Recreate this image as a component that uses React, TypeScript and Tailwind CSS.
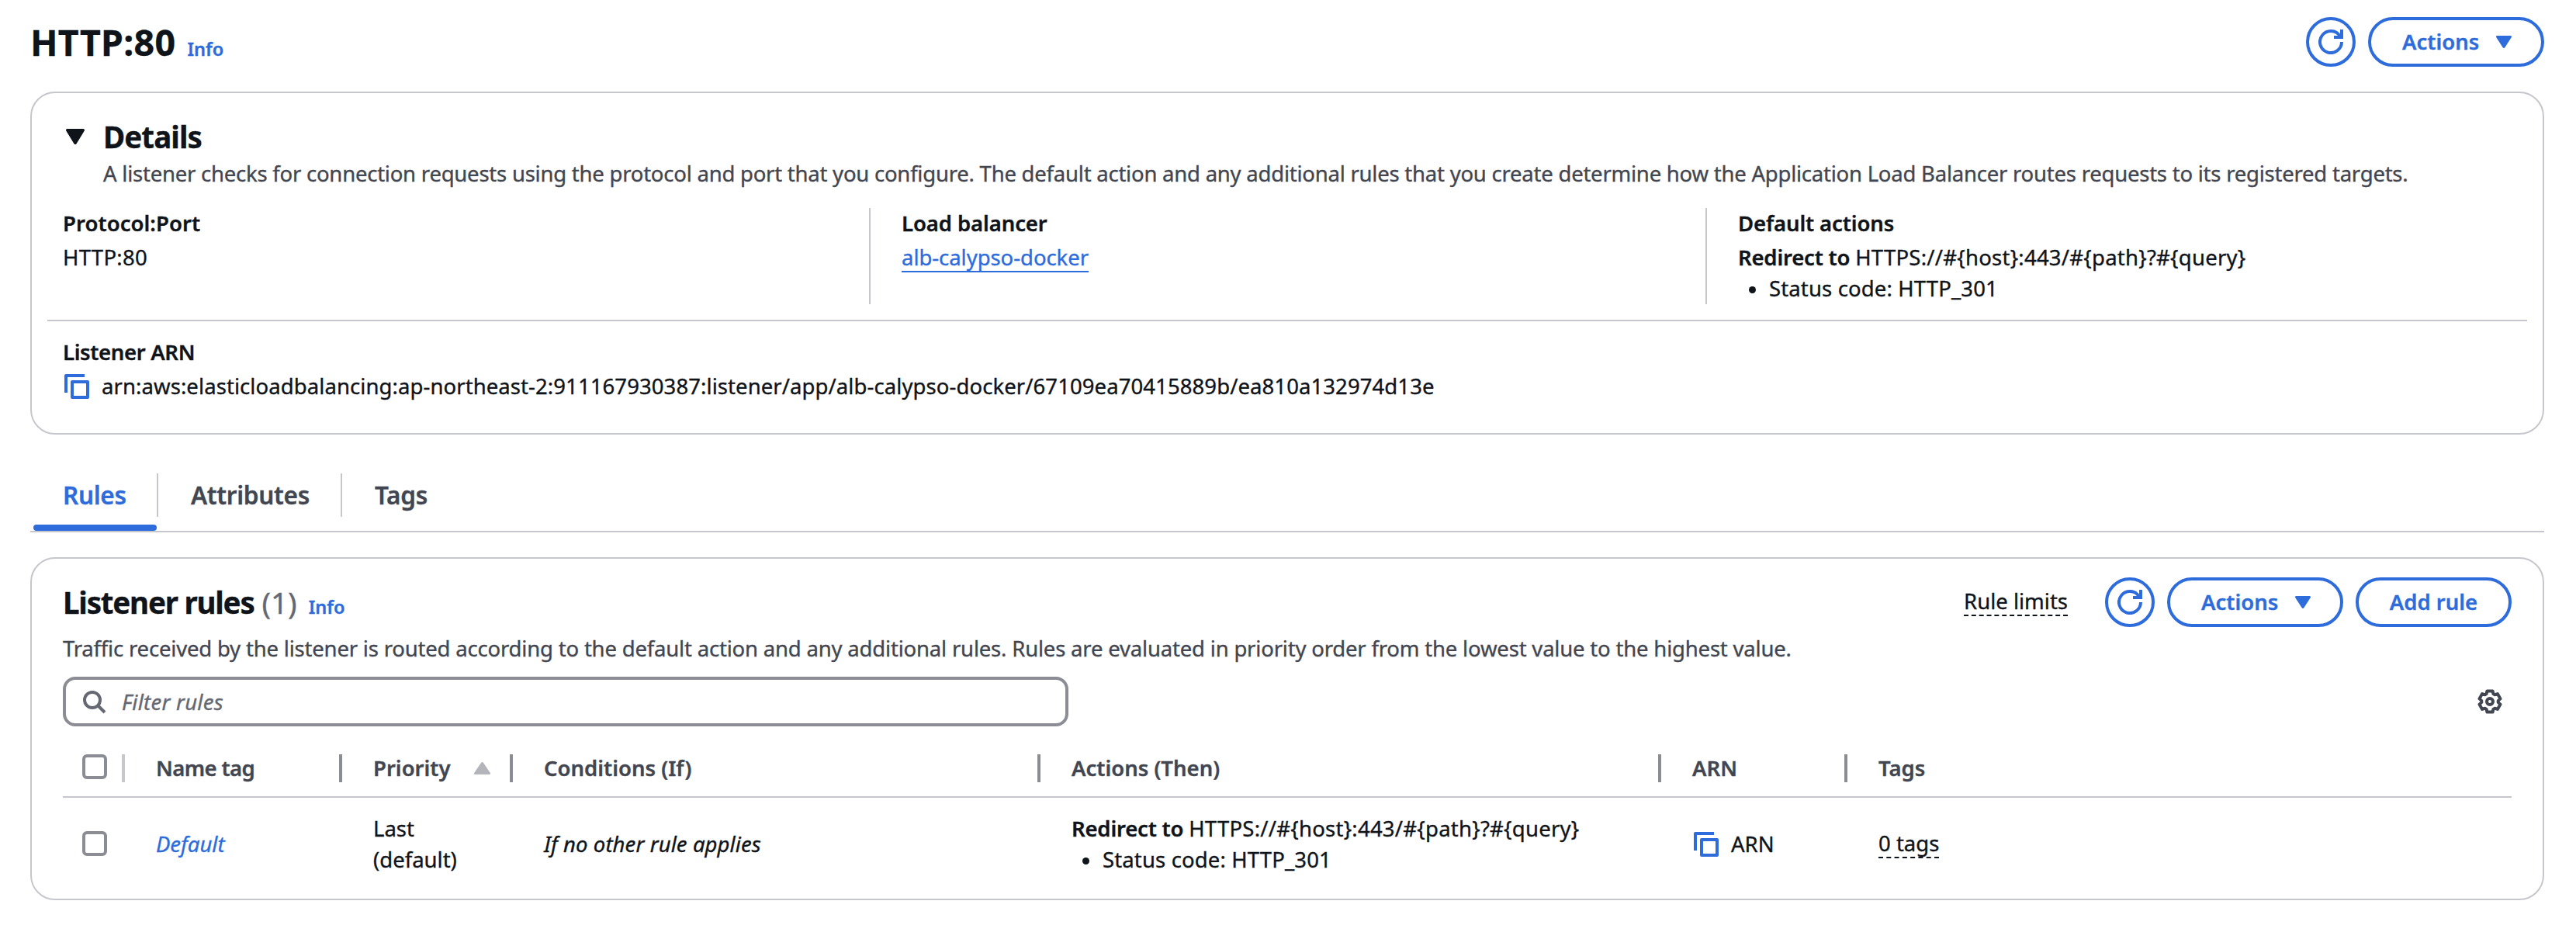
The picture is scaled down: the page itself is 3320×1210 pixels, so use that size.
import type { ReactNode } from "react";

function RefreshIcon() {
  return (
    <svg viewBox="0 0 32 32" className="h-8 w-8" fill="none" stroke="currentColor" strokeWidth="4">
      <path d="M30 16a14 14 0 1 1-2.2-7.5" />
      <path d="M30 0v10H20" />
    </svg>
  );
}

function CaretDown({ className }: { className: string }) {
  return (
    <svg viewBox="0 0 20 16" preserveAspectRatio="none" className={className} fill="currentColor">
      <path d="M1.4 0h17.2c1.2 0 1.8 1.300 1.100 2.200L11.300 15.300c-.6.900-2 .900-2.600 0L.3 2.200C-.4 1.300.2 0 1.400 0z" />
    </svg>
  );
}

function CopyIcon() {
  return (
    <svg viewBox="0 0 32 32" className="h-8 w-8 shrink-0 text-[#2e6cdb]" fill="none" stroke="currentColor" strokeWidth="4">
      <path d="M26 2H2V24" strokeLinejoin="round" />
      <rect x="10" y="10" width="20" height="20" strokeLinejoin="round" />
    </svg>
  );
}

function SearchIcon() {
  return (
    <svg viewBox="0 0 32 32" className="h-8 w-8 shrink-0 text-[#656871]" fill="none" stroke="currentColor" strokeWidth="4">
      <circle cx="14" cy="14" r="10" />
      <path d="M21 21l9 9" />
    </svg>
  );
}

function GearIcon() {
  const tooth: [number, number][] = [
    [10.8, -24],
    [14, -15],
    [14, 15],
    [10.8, 24],
  ];
  const points = [0, 60, 120, 180, 240, 300]
    .flatMap((base) =>
      tooth.map(([r, a]) => {
        const t = ((base + a - 90) * Math.PI) / 180;
        return `${(16 + r * Math.cos(t)).toFixed(2)},${(16 + r * Math.sin(t)).toFixed(2)}`;
      }),
    )
    .join(" ");
  return (
    <svg viewBox="0 0 32 32" className="h-8 w-8 text-[#424650]" fill="none" stroke="currentColor" strokeWidth="4" strokeLinejoin="round">
      <polygon points={points} />
      <circle cx="16" cy="16" r="4" />
    </svg>
  );
}

function RefreshButton() {
  return (
    <button className="flex h-16 w-16 items-center justify-center rounded-full border-4 border-[#2e6cdb] text-[#2e6cdb]">
      <RefreshIcon />
    </button>
  );
}

function ActionsButton() {
  return (
    <button className="flex h-16 w-[227px] items-center justify-between rounded-full border-4 border-[#2e6cdb] pr-[38px] pl-10 font-semibold text-[#2e6cdb]">
      <span>Actions</span>
      <CaretDown className="h-4 w-5" />
    </button>
  );
}

function RedirectAction() {
  return (
    <div className="leading-[40px] whitespace-nowrap">
      <div className="flex">
        <span className="font-semibold tracking-[-0.2px] whitespace-pre">Redirect to </span>
        <span className="tracking-[0.24px]">{"HTTPS://#{host}:443/#{path}?#{query}"}</span>
      </div>
      <div className="flex items-center gap-[17px] pl-[14px]">
        <span className="mt-[2px] h-[9px] w-[9px] rounded-full bg-[#0f141a]" />
        <span className="tracking-[0.14px]">Status code: HTTP_301</span>
      </div>
    </div>
  );
}

function Checkbox({ className = "" }: { className?: string }) {
  return <span className={`ml-[25px] block h-8 w-8 rounded-md border-4 border-[#8c8c94] ${className}`} />;
}

function HeaderCell({ children, last = false }: { children: ReactNode; last?: boolean }) {
  return (
    <div className={last ? "flex h-9 items-center pl-10" : "flex h-9 items-center justify-between border-r-4 border-[#8c8c94] pr-[25px] pl-10"}>
      {children}
    </div>
  );
}

const columns = "grid grid-cols-[80px_280px_220px_680px_800px_240px_1fr]";

export default function App() {
  return (
    <div className="h-[1210px] w-[3320px] overflow-hidden bg-white pt-[22px] pr-[41px] pl-[39px] font-['Noto_Sans',sans-serif] text-[27.5px] leading-[40px] text-[#0f141a] [-webkit-text-stroke:0.35px]">
      <header className="flex h-16 items-center justify-between">
        <div className="flex items-baseline gap-[15px]">
          <h1 className="text-[46.5px] leading-[60px] font-bold tracking-[0.3px]">HTTP:80</h1>
          <a className="text-[23.5px] leading-none font-semibold text-[#2e6cdb]">Info</a>
        </div>
        <div className="flex gap-4">
          <RefreshButton />
          <ActionsButton />
        </div>
      </header>

      <section className="mt-8 h-[442px] rounded-[32px] border-2 border-[#c6c6cd] px-10 pt-8">
        <div className="flex items-center gap-6">
          <CaretDown className="ml-1 h-5 w-6" />
          <h2 className="text-[38.5px] leading-[48px] font-bold tracking-[-0.9px]">Details</h2>
        </div>
        <p className="mt-1 pl-[52px] tracking-[-0.23px] whitespace-nowrap text-[#424650]">
          A listener checks for connection requests using the protocol and port that you configure. The default action and any
          additional rules that you create determine how the Application Load Balancer routes requests to its registered targets.
        </p>

        <div className="mt-6 grid h-[124px] grid-cols-[1039px_1078px_1fr]">
          <div className="pt-px">
            <div className="leading-[38px] font-semibold tracking-[0.05px]">Protocol:Port</div>
            <div className="mt-[5px] tracking-[0.3px]">HTTP:80</div>
          </div>
          <div className="border-l-2 border-[#c6c6cd] pt-px pl-10">
            <div className="leading-[38px] font-semibold tracking-[-0.1px]">Load balancer</div>
            <a className="mt-[7px] block w-fit border-b-2 border-[#2e6cdb] leading-[35px] tracking-[-0.05px] text-[#2e6cdb]">
              alb-calypso-docker
            </a>
          </div>
          <div className="border-l-2 border-[#c6c6cd] pt-px pl-10">
            <div className="mb-[5px] leading-[38px] font-semibold tracking-[-0.13px]">Default actions</div>
            <RedirectAction />
          </div>
        </div>

        <hr className="-mx-5 mt-5 border-t-2 border-[#c6c6cd]" />

        <div className="mt-[21px] leading-[38px] font-semibold tracking-[-0.35px]">Listener ARN</div>
        <div className="mt-[5px] flex items-center gap-4 pl-[2px]">
          <CopyIcon />
          <span className="tracking-[0.08px] whitespace-nowrap">
            arn:aws:elasticloadbalancing:ap-northeast-2:911167930387:listener/app/alb-calypso-docker/67109ea70415889b/ea810a132974d13e
          </span>
        </div>
      </section>

      <nav className="mt-[50px] flex h-[76px] border-b-2 border-[#c6c6cd] pl-1 text-[31.5px] leading-[56px] font-semibold text-[#424650]">
        <div className="flex w-[161px] flex-col">
          <span className="h-14 border-r-2 border-[#c6c6cd] pl-[38px] tracking-[-0.3px] text-[#2e6cdb]">Rules</span>
          <span className="mt-[10px] h-2 w-[159px] rounded-full bg-[#2e6cdb]" />
        </div>
        <span className="h-14 w-[237px] border-r-2 border-[#c6c6cd] pl-[42px] tracking-[-0.3px]">Attributes</span>
        <span className="h-14 pl-[42px] tracking-[-0.3px]">Tags</span>
      </nav>

      <section className="mt-8 h-[442px] rounded-[32px] border-2 border-[#c6c6cd] px-10 pt-6">
        <div className="flex h-16 items-center justify-between">
          <div className="flex items-baseline">
            <h2 className="text-[38.5px] leading-[48px] font-bold tracking-[-1.2px]">Listener rules</h2>
            <span className="ml-[10px] text-[38.5px] leading-[48px] text-[#656871]">(1)</span>
            <a className="ml-[15px] text-[23.5px] leading-none font-semibold text-[#2e6cdb]">Info</a>
          </div>
          <div className="flex items-center gap-4">
            <a className="mr-8 border-b-2 border-dashed border-[#0f141a] leading-[34px]">Rule limits</a>
            <RefreshButton />
            <ActionsButton />
            <button className="flex h-16 w-[201px] items-center justify-center rounded-full border-4 border-[#2e6cdb] font-semibold text-[#2e6cdb]">
              Add rule
            </button>
          </div>
        </div>
        <p className="mt-2 tracking-[-0.19px] whitespace-nowrap text-[#424650]">
          Traffic received by the listener is routed according to the default action and any additional rules. Rules are
          evaluated in priority order from the lowest value to the highest value.
        </p>

        <div className="mt-4 flex items-center justify-between pr-3">
          <div className="flex h-16 w-[1296px] items-center gap-5 rounded-2xl border-4 border-[#8c8c94] pl-5 text-[#656871]">
            <SearchIcon />
            <span className="pt-px tracking-[0.25px] italic">Filter rules</span>
          </div>
          <GearIcon />
        </div>

        <div className={`${columns} h-[92px] border-b-2 border-[#c6c6cd] pt-9 font-semibold text-[#424650]`}>
          <div className="h-9 border-r-4 border-[#c6c6cd]">
            <Checkbox />
          </div>
          <HeaderCell>
            <span className="tracking-[-0.6px]">Name tag</span>
          </HeaderCell>
          <HeaderCell>
            <span>Priority</span>
            <CaretDown className="h-4 w-[21px] rotate-180 text-[#b4b4bb]" />
          </HeaderCell>
          <HeaderCell>Conditions (If)</HeaderCell>
          <HeaderCell>Actions (Then)</HeaderCell>
          <HeaderCell>ARN</HeaderCell>
          <HeaderCell last>Tags</HeaderCell>
        </div>

        <div className={`${columns} items-center pt-5`}>
          <Checkbox className="mb-[2px]" />
          <a className="pl-10 text-[#2e6cdb] italic">Default</a>
          <div className="pl-10">
            <div>Last</div>
            <div>(default)</div>
          </div>
          <div className="pl-10 tracking-[0.08px] italic">If no other rule applies</div>
          <div className="pl-10">
            <RedirectAction />
          </div>
          <div className="flex items-center gap-4 pl-[42px]">
            <CopyIcon />
            <span>ARN</span>
          </div>
          <a className="ml-10 w-fit border-b-2 border-dashed border-[#0f141a] leading-[34px]">0 tags</a>
        </div>
      </section>
    </div>
  );
}
